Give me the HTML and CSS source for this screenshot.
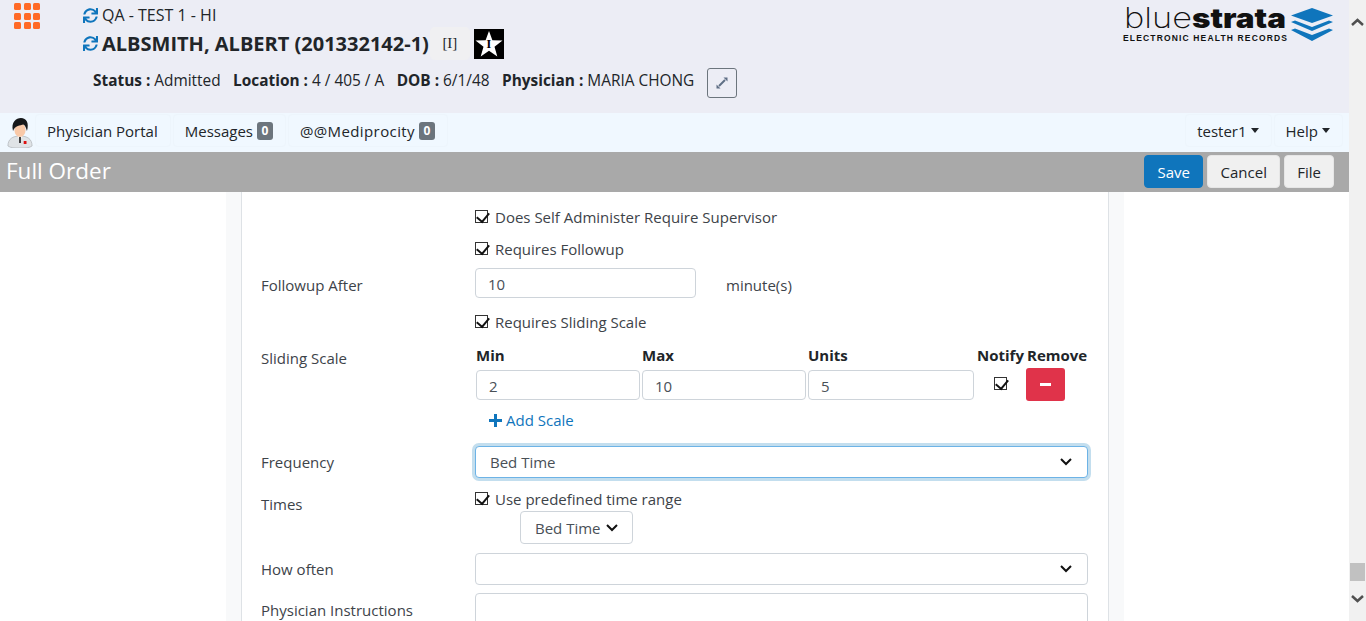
FILE: index.html
```html
<!DOCTYPE html>
<html lang="en">
<head>
    <meta charset="UTF-8">
    <title>Full Order</title>
    <link rel="stylesheet" href="styles.css">
</head>
<body>
    <svg class="defs" width="0" height="0">
        <symbol id="sync" viewBox="0 0 512 512">
            <path d="M440.65 12.57l4 82.77A247.16 247.16 0 0 0 255.83 8C134.73 8 33.91 94.92 12.29 209.82A12 12 0 0 0 24.09 224h49.05a12 12 0 0 0 11.67-9.26 175.91 175.91 0 0 1 317-56.94l-101.46-4.86a12 12 0 0 0-12.57 12v47.41a12 12 0 0 0 12 12H500a12 12 0 0 0 12-12V12a12 12 0 0 0-12-12h-47.37a12 12 0 0 0-11.98 12.57zM255.83 432a175.61 175.61 0 0 1-146-77.8l101.8 4.87a12 12 0 0 0 12.57-12v-47.4a12 12 0 0 0-12-12H12a12 12 0 0 0-12 12V500a12 12 0 0 0 12 12h47.35a12 12 0 0 0 12-12.6l-4.15-82.57A247.17 247.17 0 0 0 255.83 504c121.11 0 221.93-86.92 243.55-201.82a12 12 0 0 0-11.8-14.18h-49.05a12 12 0 0 0-11.67 9.26A175.86 175.86 0 0 1 255.83 432z"/>
        </symbol>
    </svg>

    <div class="page">
        <div class="main">
            <header class="patient">
                <div class="apps">
                    <i></i><i></i><i></i><i></i><i></i><i></i><i></i><i></i><i></i>
                </div>
                <div class="patient-info">
                    <div class="facility">
                        <svg class="sync"><use href="#sync"/></svg>
                        <span>QA - TEST 1 - HI</span>
                    </div>
                    <div class="name-row">
                        <svg class="sync"><use href="#sync"/></svg>
                        <span class="name">ALBSMITH, ALBERT (201332142-1)</span>
                        <span class="code">[I]</span>
                        <span class="star">
                            <svg width="30" height="30" viewBox="0 0 30 30"><polygon points="15,2 18.400,11.200 28.500,11.500 20.500,17.700 23.300,27.500 15,21.800 6.700,27.500 9.500,17.700 1.500,11.500 11.600,11.200" fill="#fff"/></svg>
                            <b>I</b>
                        </span>
                    </div>
                    <div class="details">
                        <span><b>Status :</b> Admitted</span>
                        <span><b>Location :</b> 4 / 405 / A</span>
                        <span><b>DOB :</b> 6/1/48</span>
                        <span><b>Physician :</b> MARIA CHONG</span>
                        <button class="expand">
                            <svg width="14" height="14" viewBox="0 0 14 14" fill="#5f6f85"><polygon points="8.500,1.500 12.500,1.500 12.500,5.500"/><polygon points="1.500,8.500 1.500,12.500 5.500,12.500"/><path d="M4 10l6-6" stroke="#5f6f85" stroke-width="2"/></svg>
                        </button>
                    </div>
                </div>
                <svg class="logo" width="212" height="43" viewBox="0 0 212 43">
                    <text x="2" y="28" class="logo-blue" textLength="68" lengthAdjust="spacingAndGlyphs">blue</text>
                    <text x="70" y="28" class="logo-strata" textLength="94" lengthAdjust="spacingAndGlyphs">strata</text>
                    <text x="1" y="41" class="logo-sub" textLength="164" lengthAdjust="spacing">ELECTRONIC HEALTH RECORDS</text>
                    <g fill="#0f75bc">
                        <polygon points="190,8 211,15.500 190,23 169,15.500"/>
                        <polygon points="169,22 173,20.500 190,27 207,20.500 211,22 190,31"/>
                        <polygon points="169,30 173,28.500 190,35 207,28.500 211,30 190,41"/>
                    </g>
                </svg>
            </header>

            <nav class="menu">
                <svg class="avatar" width="26" height="30" viewBox="0 0 28 30" preserveAspectRatio="none">
                    <path d="M1 28c0-7 5-10 13-10s13 3 13 10c-3 2-7 2-13 2s-10 0-13-2z" fill="#dfe3e6" stroke="#b4b9bd" stroke-width=".8"/>
                    <path d="M11 17h6l-3 6z" fill="#fff"/>
                    <rect x="13" y="19" width="2" height="6" fill="#333"/>
                    <rect x="18" y="23" width="3" height="3" fill="#d11"/>
                    <ellipse cx="14" cy="12" rx="6" ry="7" fill="#f9c9a8"/>
                    <path d="M6.500 13C4 4 10 0 15 0c6 0 9 5 6.500 13-1-3-2-6-4-6.500-3 1-9 1-11 6.500z" fill="#16181a"/>
                </svg>
                <a class="tab tab-portal">Physician Portal</a>
                <a class="tab">Messages <span class="badge">0</span></a>
                <a class="tab tab-wide">@@Mediprocity <span class="badge">0</span></a>
                <a class="tab tab-user">tester1 <i class="caret"></i></a>
                <a class="tab tab-help">Help <i class="caret"></i></a>
            </nav>

            <div class="titlebar">
                <h1>Full Order</h1>
                <button class="btn btn-save">Save</button>
                <button class="btn btn-cancel">Cancel</button>
                <button class="btn">File</button>
            </div>

            <div class="content">
                <form class="sheet">
                    <div class="row row-check">
                        <label></label>
                        <div class="check"><input type="checkbox" checked> Does Self Administer Require Supervisor</div>
                    </div>
                    <div class="row row-check">
                        <label></label>
                        <div class="check"><input type="checkbox" checked> Requires Followup</div>
                    </div>
                    <div class="row row-followup">
                        <label>Followup After</label>
                        <input class="field field-short" type="text" value="10">
                        <span class="unit">minute(s)</span>
                    </div>
                    <div class="row row-check row-sliding">
                        <label></label>
                        <div class="check"><input type="checkbox" checked> Requires Sliding Scale</div>
                    </div>
                    <div class="row row-scale">
                        <label>Sliding Scale</label>
                        <div class="scale">
                            <b>Min</b><b>Max</b><b>Units</b><b>Notify</b><b>Remove</b>
                            <input class="field" type="text" value="2">
                            <input class="field" type="text" value="10">
                            <input class="field" type="text" value="5">
                            <div class="notify"><input type="checkbox" checked></div>
                            <button type="button" class="btn-remove"><i></i></button>
                        </div>
                    </div>
                    <div class="row row-add">
                        <label></label>
                        <a class="add-scale"><svg width="13" height="13" viewBox="0 0 13 13" fill="#0f75bc"><path d="M5 0h3v5h5v3H8v5H5V8H0V5h5z"/></svg> Add Scale</a>
                    </div>
                    <div class="row row-frequency">
                        <label>Frequency</label>
                        <select class="field select select-focus"><option>Bed Time</option></select>
                    </div>
                    <div class="row row-times">
                        <label>Times</label>
                        <div>
                            <div class="check"><input type="checkbox" checked> Use predefined time range</div>
                            <button type="button" class="time-btn">Bed Time <svg width="12" height="8" viewBox="0 0 12 8" fill="none" stroke="#111" stroke-width="2"><path d="M1 1l5 5 5-5"/></svg></button>
                        </div>
                    </div>
                    <div class="row row-often">
                        <label>How often</label>
                        <select class="field select"><option></option></select>
                    </div>
                    <div class="row row-instructions">
                        <label>Physician Instructions</label>
                        <textarea class="field notes"></textarea>
                    </div>
                </form>
            </div>
        </div>

        <div class="scrollbar">
            <svg width="17" height="17" viewBox="0 0 17 17" fill="none" stroke="#505050" stroke-width="2.500"><path d="M3 11l5.500-5 5.500 5"/></svg>
            <div class="thumb"></div>
            <svg width="17" height="17" viewBox="0 0 17 17" fill="none" stroke="#505050" stroke-width="2.500"><path d="M3 6l5.500 5 5.500-5"/></svg>
        </div>
    </div>
</body>
</html>
```

FILE: styles.css
```css
* {
    box-sizing: border-box;
}
html, body {
    height: 100%;
}
body {
    margin: 0;
    overflow: hidden;
    font-family: "Open Sans", "Noto Sans", sans-serif;
    font-size: 15px;
    color: #212529;
    background-color: #fff;
}
.defs {
    position: absolute;
}
.page {
    display: flex;
    height: 621px;
}
.main {
    flex: 1;
    min-width: 0;
    display: flex;
    flex-direction: column;
    overflow: hidden;
}

/* patient header */
.patient {
    display: flex;
    height: 113px;
    flex-shrink: 0;
    background-color: #ecedf5;
    padding: 3px 15px 0 14px;
}
.apps {
    display: grid;
    grid-template-columns: repeat(3, 7px);
    grid-auto-rows: 7px;
    gap: 2.500px;
    width: 26px;
    height: 26px;
}
.apps i {
    background-color: #ff6a26;
    border-radius: 1.500px;
}
.patient-info {
    margin-left: 43px;
    flex: 1;
}
.sync {
    width: 15px;
    height: 15px;
    fill: #0f75bc;
    flex-shrink: 0;
}
.facility {
    display: flex;
    align-items: center;
    gap: 4px;
    height: 24px;
    font-size: 16px;
}
.name-row {
    display: flex;
    align-items: center;
    height: 33px;
    gap: 4px;
}
.name {
    font-size: 20px;
    font-weight: 700;
    white-space: nowrap;
}
.code {
    width: 40px;
    height: 33px;
    margin-left: -3px;
    display: flex;
    align-items: center;
    justify-content: center;
    background-color: #f0f0f2;
    border-radius: 5px;
    font-family: "Liberation Serif", serif;
    font-size: 15px;
}
.star {
    position: relative;
    width: 30px;
    height: 30px;
    background-color: #000;
}
.star svg {
    display: block;
}
.star b {
    position: absolute;
    left: 0;
    right: 0;
    top: 8px;
    text-align: center;
    font: bold 12px "Liberation Serif", serif;
    color: #000;
}
.details {
    display: flex;
    align-items: flex-start;
    gap: 12.500px;
    margin-left: 10px;
    margin-top: 10px;
    height: 30px;
    font-size: 15.400px;
    white-space: nowrap;
}
.expand {
    width: 30px;
    height: 30px;
    margin-top: -2px;
    margin-left: 0;
    padding: 0;
    display: flex;
    align-items: center;
    justify-content: center;
    background: transparent;
    border: 1px solid #6c757d;
    border-radius: 3px;
}
.logo {
    flex-shrink: 0;
    margin-top: -3px;
}
.logo-blue {
    font: 200 29px "Inter", sans-serif;
    fill: #111;
}
.logo-strata {
    font: 900 27px "Inter", sans-serif;
    fill: #111;
}
.logo-sub {
    font: 700 8.500px "Liberation Sans", sans-serif;
    fill: #111;
}

/* menu */
.menu {
    display: flex;
    align-items: flex-start;
    gap: 2px;
    height: 39px;
    flex-shrink: 0;
    padding: 1px 6px 0 7px;
    background-color: #f0f8ff;
}
.avatar {
    margin-top: 4px;
    flex-shrink: 0;
}
.tab {
    display: flex;
    align-items: center;
    gap: 4px;
    height: 33px;
    padding: 0 12px 0 11px;
    border: 1px solid #edf5fc;
    border-radius: 4px;
    color: #212529;
    white-space: nowrap;
}
.tab-wide {
    letter-spacing: .4px;
}
.tab-user {
    margin-left: auto;
}
.badge {
    display: inline-block;
    background-color: #6c757d;
    color: #fff;
    font-size: 12px;
    font-weight: 700;
    line-height: 12px;
    letter-spacing: 0;
    padding: 3px 4.500px;
    border-radius: 3px;
}
.caret {
    width: 0;
    height: 0;
    border-top: 5px solid #212529;
    border-left: 4.500px solid transparent;
    border-right: 4.500px solid transparent;
}

/* title bar */
.titlebar {
    display: flex;
    align-items: center;
    gap: 4px;
    height: 40px;
    flex-shrink: 0;
    padding: 0 15px 1px 6px;
    background-color: #a9a9a9;
}
.titlebar h1 {
    margin: -2px auto 0 0;
    font-size: 22.500px;
    font-weight: 400;
    color: #fff;
}
.btn {
    height: 33px;
    padding: 0 12px;
    font: inherit;
    color: #212529;
    background-color: #f0f0f0;
    border: 1px solid #e6e6e6;
    border-radius: 4px;
}
.btn-save {
    width: 59px;
    padding: 0;
    color: #fff;
    background-color: #0f75bc;
    border-color: #0f75bc;
}
.btn-cancel {
    width: 73px;
    padding: 0;
}

/* form */
.content {
    flex: 1;
    overflow: hidden;
    padding-left: 226px;
}
.sheet {
    width: 898px;
    height: 100%;
    background-color: #fff;
    border-left: 15px solid #f8f9fa;
    border-right: 15px solid #f8f9fa;
    box-shadow: inset 1px 0 0 #dee2e6, inset -1px 0 0 #dee2e6;
    padding: 9px 21px 0 20px;
    color: #3d4349;
}
.row {
    display: grid;
    grid-template-columns: 214px 1fr;
    align-items: center;
}
.row-check {
    height: 32px;
}
.check {
    display: flex;
    align-items: center;
    gap: 7px;
}
input[type="checkbox"] {
    appearance: none;
    position: relative;
    width: 13px;
    height: 13px;
    margin: -2px 0 0;
    background-color: #fff;
    border: 1px solid #333;
}
input[type="checkbox"]:checked::after {
    content: "";
    position: absolute;
    left: 3px;
    top: -1px;
    width: 6px;
    height: 10px;
    border: solid #111;
    border-width: 0 2.500px 2.500px 0;
    transform: rotate(40deg);
}
.field {
    height: 30px;
    width: 100%;
    padding: 2px 12px 0;
    font: inherit;
    color: #495057;
    background-color: #fff;
    border: 1px solid #ced4da;
    border-radius: 4px;
}
.row-followup {
    grid-template-columns: 214px 221px 1fr;
    height: 36px;
}
.row-followup label {
    margin-top: 4px;
}
.unit {
    margin-left: 30px;
    margin-top: 4px;
}
.row-sliding {
    margin-top: 5px;
}
.row-scale {
    align-items: start;
    height: 63px;
}
.row-scale label {
    margin-top: 10px;
}
.scale {
    display: grid;
    grid-template-columns: 164px 164px 166px 48px 61px;
    grid-template-rows: 25px 33px;
    column-gap: 2px;
    padding-left: 1px;
    padding-top: 5px;
    align-items: center;
    width: 613px;
}
.scale b {
    margin-bottom: 2px;
    color: #212529;
    white-space: nowrap;
}
.scale b:nth-child(4),
.scale b:nth-child(5) {
    margin-left: 1px;
}
.scale .field {
    align-self: start;
    margin-top: 2px;
}
.notify {
    display: flex;
    justify-content: center;
}
.btn-remove {
    width: 39px;
    height: 33px;
    padding: 0;
    display: flex;
    align-items: center;
    justify-content: center;
    background-color: #e0334a;
    border: none;
    border-radius: 3px;
}
.btn-remove i {
    width: 11px;
    height: 3px;
    background-color: #fff;
}
.row-add {
    height: 38px;
}
.add-scale {
    display: flex;
    align-items: center;
    gap: 4px;
    padding-left: 14px;
    color: #0f75bc;
}
.row-frequency {
    height: 46px;
}
.select {
    appearance: none;
    height: 32px;
    padding: 0 11px;
    background-image: url("data:image/svg+xml,%3Csvg xmlns='http://www.w3.org/2000/svg' width='12' height='8' fill='none' stroke='%23111' stroke-width='2'%3E%3Cpath d='M1 1l5 5 5-5'/%3E%3C/svg%3E");
    background-repeat: no-repeat;
    background-position: right 15px center;
}
.select-focus {
    padding-left: 14px;
    border-color: #6db3e6;
    box-shadow: 0 0 0 3px #c3deee;
}
.row-times {
    align-items: start;
    height: 65px;
    margin-top: 3px;
}
.row-times label {
    margin-top: 6px;
}
.row-times .check {
    height: 22px;
}
.time-btn {
    display: flex;
    align-items: center;
    gap: 5px;
    height: 33px;
    margin-left: 45px;
    margin-top: 1px;
    padding: 0 14px;
    font: inherit;
    color: #495057;
    background-color: #fff;
    border: 1px solid #ced4da;
    border-radius: 4px;
}
.row-often {
    height: 32px;
}
.row-instructions {
    align-items: start;
    margin-top: 8px;
}
.row-instructions label {
    margin-top: 7px;
}
.notes {
    display: block;
    height: 60px;
    resize: none;
}

/* scrollbar */
.scrollbar {
    width: 17px;
    flex-shrink: 0;
    display: flex;
    flex-direction: column;
    background-color: #f1f1f1;
    padding: 14px 0;
}
.thumb {
    width: 15px;
    height: 18px;
    margin: auto 1px 9px;
    background-color: #c1c1c1;
}
```
